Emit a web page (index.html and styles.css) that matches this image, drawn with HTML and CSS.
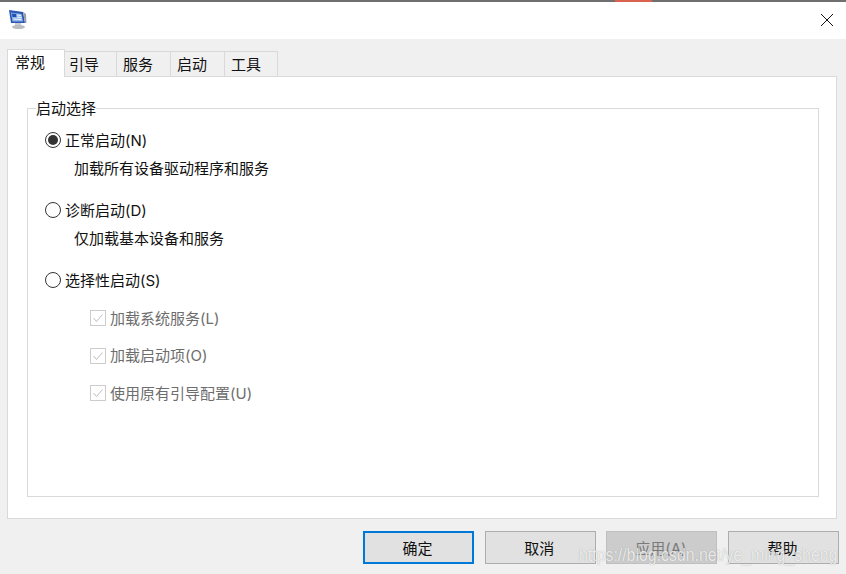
FILE: index.html
```html
<!DOCTYPE html>
<html lang="zh-CN">
<head>
<meta charset="utf-8">
<title>系统配置</title>
<link rel="stylesheet" href="styles.css">
</head>
<body>
<div class="dialog">
  <div class="topedge"><span class="edge-mark"></span></div>
  <header class="titlebar">
    <svg class="appicon" width="20" height="22" viewBox="0 0 20 22">
      <path d="M2 2 L16 4 L18 15 L4 15 Z" fill="#2a55b5"/>
      <path d="M4 4.5 L14.5 6 L16 13.5 L5.5 13.5 Z" fill="#8fb6e8"/>
      <path d="M5 5.5 L9 6 L9.5 9 L5.5 9 Z" fill="#1f50b0"/>
      <path d="M10 7 L14 7.5 M10 9 L14.5 9.5 M6.5 11 L14.5 11.5" stroke="#f2f6fc" stroke-width="1.2"/>
      <path d="M16 4 L19 6 L19.5 15 L18 15 Z" fill="#9a9fa8"/>
      <path d="M8 15 L14 15 L14.5 18 L8 18 Z" fill="#c9ccd0"/>
      <ellipse cx="11.5" cy="19" rx="6.5" ry="2" fill="#b9bcc0"/>
    </svg>
    <svg class="close" width="14" height="14" viewBox="0 0 14 14">
      <path d="M1 1 L13 13 M13 1 L1 13" stroke="#111" stroke-width="1" fill="none"/>
    </svg>
  </header>
  <main class="body">
    <nav class="tabs">
      <div class="tab active">常规</div>
      <div class="tab t2">引导</div>
      <div class="tab t3">服务</div>
      <div class="tab t3">启动</div>
      <div class="tab t4">工具</div>
    </nav>
    <section class="panel">
      <div class="group">
        <div class="legend">启动选择</div>
        <div class="option first">
          <span class="radio checked"></span><span class="label">正常启动(N)</span>
        </div>
        <div class="desc">加载所有设备驱动程序和服务</div>
        <div class="option">
          <span class="radio"></span><span class="label">诊断启动(D)</span>
        </div>
        <div class="desc">仅加载基本设备和服务</div>
        <div class="option">
          <span class="radio"></span><span class="label">选择性启动(S)</span>
        </div>
        <div class="checks">
          <div class="check">
            <svg class="box" width="16" height="16" viewBox="0 0 16 16"><rect x="0.5" y="0.5" width="15" height="15" fill="#fff" stroke="#cccccc"/><path d="M3.5 8 L6.5 11.5 L12.5 4.5" stroke="#bdbdbd" fill="none"/></svg>
            <span class="label">加载系统服务(L)</span>
          </div>
          <div class="check">
            <svg class="box" width="16" height="16" viewBox="0 0 16 16"><rect x="0.5" y="0.5" width="15" height="15" fill="#fff" stroke="#cccccc"/><path d="M3.5 8 L6.5 11.5 L12.5 4.5" stroke="#bdbdbd" fill="none"/></svg>
            <span class="label">加载启动项(O)</span>
          </div>
          <div class="check">
            <svg class="box" width="16" height="16" viewBox="0 0 16 16"><rect x="0.5" y="0.5" width="15" height="15" fill="#fff" stroke="#cccccc"/><path d="M3.5 8 L6.5 11.5 L12.5 4.5" stroke="#bdbdbd" fill="none"/></svg>
            <span class="label">使用原有引导配置(U)</span>
          </div>
        </div>
      </div>
    </section>
    <footer class="buttons">
      <button class="btn default">确定</button>
      <button class="btn">取消</button>
      <button class="btn disabled">应用(A)</button>
      <button class="btn">帮助</button>
    </footer>
  </main>
  <div class="watermark">https://blog.csdn.net/ye_ming_sheng</div>
</div>
</body>
</html>
```

FILE: styles.css
```css
* { box-sizing: border-box; }
html, body { margin: 0; padding: 0; }
body {
  width: 846px;
  height: 574px;
  overflow: hidden;
  background: #f0f0f0;
  color: #111;
  font-family: "Inter", "Noto Sans CJK SC", sans-serif;
  font-size: 15px;
}
.dialog {
  position: relative;
  width: 846px;
  height: 574px;
  display: flex;
  flex-direction: column;
}
.topedge {
  height: 2px;
  background: #6f6f6f;
  display: flex;
  justify-content: flex-end;
  padding-right: 194px;
}
.edge-mark {
  width: 37px;
  height: 2px;
  background: #d9634f;
}
.titlebar {
  height: 37px;
  background: #fff;
  display: flex;
  align-items: center;
  justify-content: space-between;
  padding: 0 12px 0 7px;
}
.appicon { margin-top: -3px; }
.close { margin-top: -2px; }
.body {
  flex: 1;
  display: flex;
  flex-direction: column;
  padding: 10px 7px 0 7px;
  background: #f0f0f0;
}
.tabs {
  display: flex;
  height: 27px;
  align-items: flex-end;
  position: relative;
  z-index: 1;
}
.tab {
  height: 25px;
  width: 55px;
  margin-left: -1px;
  border: 1px solid #d9d9d9;
  border-bottom: none;
  background: #f0f0f0;
  padding-left: 6px;
  line-height: 26px;
}
.tab.active {
  width: 58px;
  height: 28px;
  margin: 0 0 -1px 0;
  background: #fff;
  padding-left: 7px;
  line-height: 25px;
}
.tab.t2 { width: 53px; padding-left: 4px; }
.tab.t4 { width: 54px; padding-left: 6px; }
.panel {
  width: 830px;
  height: 443px;
  background: #fff;
  border: 1px solid #d9d9d9;
  padding: 31px 17px 21px 19px;
}
.group {
  position: relative;
  height: 389px;
  border: 1px solid #d9d9d9;
  padding: 0 0 0 17px;
}
.legend {
  position: absolute;
  top: -9px;
  left: 8px;
  background: #fff;
  line-height: 18px;
}
.option {
  display: flex;
  align-items: center;
  gap: 4px;
  height: 20px;
  margin-top: 21px;
}
.label { padding-bottom: 2px; }
.radio {
  width: 16px;
  height: 16px;
  border: 1px solid #333;
  border-radius: 50%;
  background: #fff;
  position: relative;
  flex: none;
}
.radio.checked::after {
  content: "";
  position: absolute;
  left: 2px;
  top: 2px;
  width: 10px;
  height: 10px;
  border-radius: 50%;
  background: #333;
}
.desc {
  height: 20px;
  line-height: 20px;
  margin: 9px 0 0 29px;
}
.checks {
  margin: 18px 0 0 45px;
  display: flex;
  flex-direction: column;
  gap: 17.5px;
  color: #6d6d6d;
}
.check {
  display: flex;
  align-items: center;
  gap: 4px;
  height: 20px;
}
.box { flex: none; }
.buttons {
  display: flex;
  justify-content: flex-end;
  gap: 10.67px;
  margin-top: 12px;
}
.btn {
  width: 111px;
  height: 33px;
  padding: 0 2px 0 0;
  border: 1px solid #adadad;
  background: #e1e1e1;
  color: #111;
  font: inherit;
}
.btn.default {
  border: 2px solid #0078d7;
}
.btn.disabled {
  background: #cccccc;
  border-color: #bfbfbf;
  color: #7a7a7a;
}
.watermark {
  position: absolute;
  left: 579px;
  top: 544px;
  font-family: "Liberation Sans", sans-serif;
  font-size: 19px;
  line-height: 22px;
  white-space: nowrap;
  transform: scaleX(0.835);
  transform-origin: left top;
  color: rgba(255, 255, 255, 0.8);
  text-shadow: 0 0 1px rgba(90, 90, 90, 0.5);
}
```
